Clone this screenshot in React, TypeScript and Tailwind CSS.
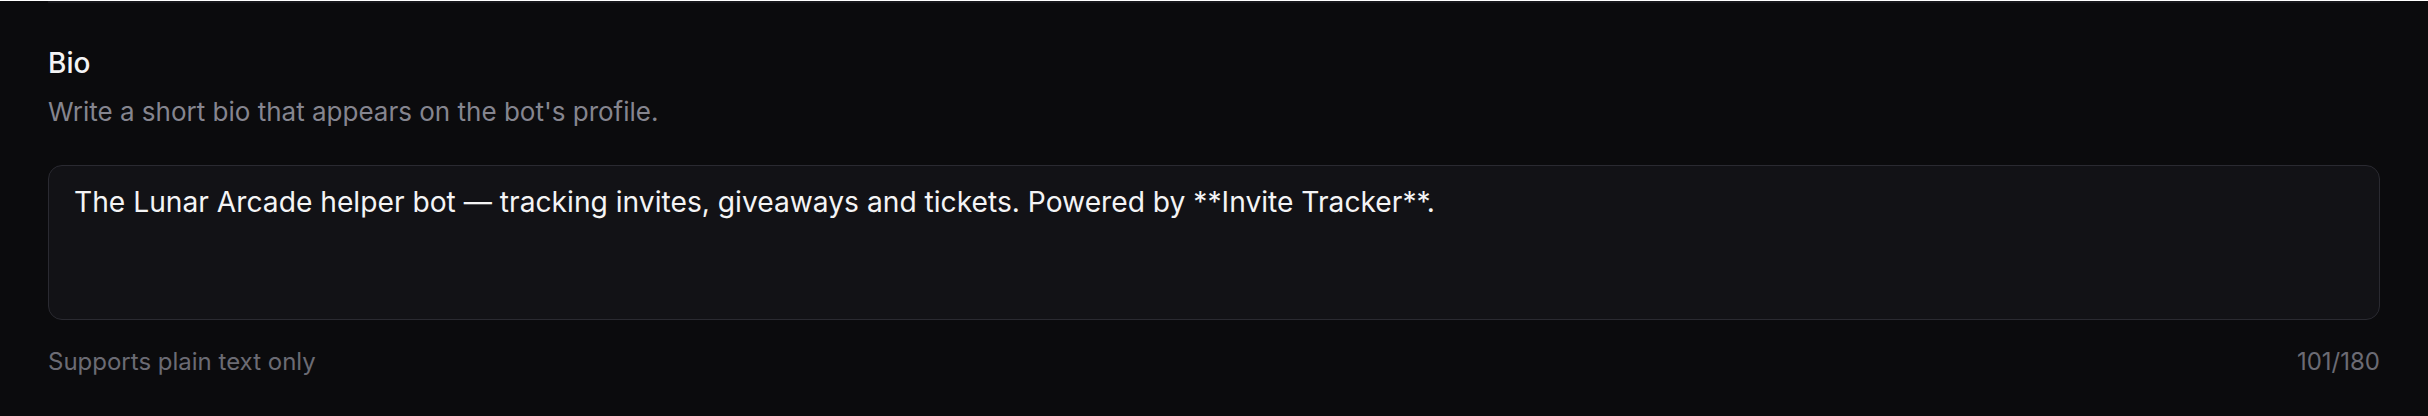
import React from "react";

const BIO =
  "The Lunar Arcade helper bot — tracking invites, giveaways and tickets. Powered by **Invite Tracker**.";

export default function App() {
  const max = 180;
  return (
    <div
      className="min-h-screen w-full bg-[#0b0b0d] px-[48px]"
      style={{ fontFamily: "Inter, 'Noto Sans', sans-serif" }}
    >
      <section className="mt-[1px] border-t-2 border-[#18181c] pt-[40px]">
        <label className="block text-[28px] leading-[40px] font-medium text-[#f4f4f5]">
          Bio
        </label>
        <p className="mt-[11px] text-[26px] leading-[36px] text-[#85858f]">
          Write a short bio that appears on the bot's profile.
        </p>
        <div className="mt-[35px] h-[155px] rounded-[14px] border border-[#2a2a31] bg-[#121216] px-[25px] py-[16px]">
          <p className="text-[28.2px] leading-[40px] text-[#f4f4f5]">{BIO}</p>
        </div>
        <div className="mt-[26px] flex items-center justify-between text-[24px] leading-[32px] text-[#6b6b74]">
          <span>Supports plain text only</span>
          <span>
            {BIO.length}/{max}
          </span>
        </div>
      </section>
    </div>
  );
}
